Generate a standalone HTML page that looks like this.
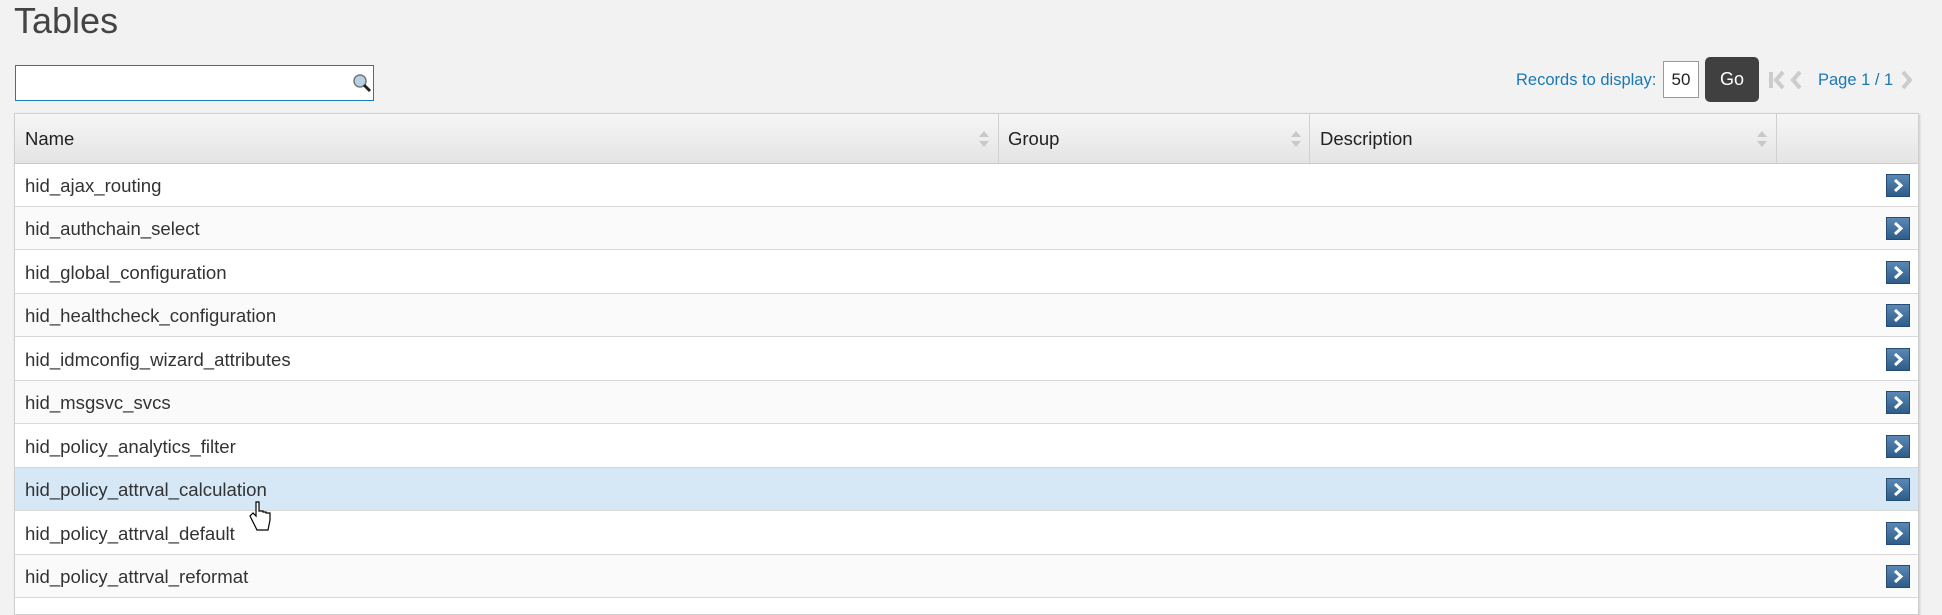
<!DOCTYPE html>
<html><head><style>
body{margin:0;width:1942px;height:601px;background:#f2f2f2;font-family:"Liberation Sans",sans-serif;overflow:hidden;position:relative}
.abs{position:absolute}
h1{position:absolute;left:14px;top:0px;margin:0;font-weight:normal;font-size:36px;color:#444}
.search{left:15px;top:65px;width:357px;height:34px;background:#fff;border:1px solid #1a7ac6}
.tbl{left:14px;top:113px;width:1903px;height:500px;background:#fff;border:1px solid #cfcfcf;box-shadow:1px 1px 2px #ccc}
.hdr{left:0;top:0;width:1903px;height:49px;background:linear-gradient(#f6f6f6,#e4e4e4);border-bottom:1px solid #ccc}
.hdr span{position:absolute;top:14px;font-size:18.5px;color:#222}
.div{position:absolute;top:0;width:1px;height:49px;background:#d0d0d0}
.sort{position:absolute;top:16px;width:12px;height:18px}
.row{position:absolute;left:0;width:1903px;height:42px;border-bottom:1px solid #d8d8d8;background:#fff}
.row span{position:absolute;left:10px;top:11px;font-size:18.6px;color:#333}
.btn{position:absolute;left:1871px;top:10px;width:22px;height:21px;background:linear-gradient(#5a88b4,#2f5d8a);border:1px solid #244c75}
.rec{font-size:16.5px;color:#1a78b6}
</style></head><body>
<h1>Tables</h1>
<div class="abs search"><svg class="abs" style="left:336px;top:7px" width="20" height="20" viewBox="0 0 20 20"><circle cx="8" cy="8" r="6" fill="#b8cfe8" stroke="#777" stroke-width="1.5"/><path d="M12 12 L18 18" stroke="#222" stroke-width="3"/></svg></div>
<div class="abs rec" style="left:1516px;top:71px">Records to display:</div>
<div class="abs" style="left:1663px;top:61px;width:34px;height:35px;background:#fff;border:1px solid #999;font-size:17px;color:#222;text-align:center;line-height:35px">50</div>
<div class="abs" style="left:1705px;top:57px;width:54px;height:45px;background:#404040;border-radius:5px;color:#fff;font-size:18px;text-align:center;line-height:45px">Go</div>
<svg class="abs" style="left:1768px;top:70px" width="50" height="20" viewBox="0 0 50 20"><rect x="1" y="2" width="4" height="16" fill="#ccc"/><path d="M15 2 L8 10 L15 18" stroke="#ccc" stroke-width="4" fill="none"/><path d="M32 2 L25 10 L32 18" stroke="#ccc" stroke-width="4" fill="none"/></svg>
<div class="abs rec" style="left:1818px;top:71px">Page 1 / 1</div>
<svg class="abs" style="left:1900px;top:70px" width="14" height="20" viewBox="0 0 14 20"><path d="M3 2 L10 10 L3 18" stroke="#ccc" stroke-width="4" fill="none"/></svg>
<div class="abs tbl">
<div class="abs hdr">
<span style="left:10px">Name</span><span style="left:993px">Group</span><span style="left:1305px">Description</span>
<svg class="sort" style="left:963px" viewBox="0 0 12 18"><path d="M1 7 L6 1 L11 7Z M1 11 L6 17 L11 11Z" fill="#c8c8c8"/></svg>
<svg class="sort" style="left:1275px" viewBox="0 0 12 18"><path d="M1 7 L6 1 L11 7Z M1 11 L6 17 L11 11Z" fill="#c8c8c8"/></svg>
<svg class="sort" style="left:1741px" viewBox="0 0 12 18"><path d="M1 7 L6 1 L11 7Z M1 11 L6 17 L11 11Z" fill="#c8c8c8"/></svg>
<div class="div" style="left:983px"></div><div class="div" style="left:1294px"></div><div class="div" style="left:1761px"></div>
</div>
<div class="row" style="top:50px"><span>hid_ajax_routing</span><div class="btn"><svg width="22" height="21"><path d="M8 5 L14 10.5 L8 16" stroke="#fff" stroke-width="3" fill="none"/></svg></div></div>
<div class="row" style="top:93px;background:#fafafa"><span>hid_authchain_select</span><div class="btn"><svg width="22" height="21"><path d="M8 5 L14 10.5 L8 16" stroke="#fff" stroke-width="3" fill="none"/></svg></div></div>
<div class="row" style="top:137px"><span>hid_global_configuration</span><div class="btn"><svg width="22" height="21"><path d="M8 5 L14 10.5 L8 16" stroke="#fff" stroke-width="3" fill="none"/></svg></div></div>
<div class="row" style="top:180px;background:#fafafa"><span>hid_healthcheck_configuration</span><div class="btn"><svg width="22" height="21"><path d="M8 5 L14 10.5 L8 16" stroke="#fff" stroke-width="3" fill="none"/></svg></div></div>
<div class="row" style="top:224px"><span>hid_idmconfig_wizard_attributes</span><div class="btn"><svg width="22" height="21"><path d="M8 5 L14 10.5 L8 16" stroke="#fff" stroke-width="3" fill="none"/></svg></div></div>
<div class="row" style="top:267px;background:#fafafa"><span>hid_msgsvc_svcs</span><div class="btn"><svg width="22" height="21"><path d="M8 5 L14 10.5 L8 16" stroke="#fff" stroke-width="3" fill="none"/></svg></div></div>
<div class="row" style="top:311px"><span>hid_policy_analytics_filter</span><div class="btn"><svg width="22" height="21"><path d="M8 5 L14 10.5 L8 16" stroke="#fff" stroke-width="3" fill="none"/></svg></div></div>
<div class="row" style="top:354px;background:#d6e8f6"><span>hid_policy_attrval_calculation</span><div class="btn"><svg width="22" height="21"><path d="M8 5 L14 10.5 L8 16" stroke="#fff" stroke-width="3" fill="none"/></svg></div></div>
<div class="row" style="top:398px"><span>hid_policy_attrval_default</span><div class="btn"><svg width="22" height="21"><path d="M8 5 L14 10.5 L8 16" stroke="#fff" stroke-width="3" fill="none"/></svg></div></div>
<div class="row" style="top:441px;background:#fafafa"><span>hid_policy_attrval_reformat</span><div class="btn"><svg width="22" height="21"><path d="M8 5 L14 10.5 L8 16" stroke="#fff" stroke-width="3" fill="none"/></svg></div></div>
</div>
<svg class="abs" style="left:248px;top:500px" width="24" height="34" viewBox="0 0 24 34"><path d="M8 2 L8 16 L5 13 L2 16 L9 30 L20 30 L22 20 L22 13 L18 13 L18 12 L15 12 L15 11 L11 11 L11 2Z" fill="#fff" stroke="#000" stroke-width="1.2"/></svg>
</body></html>
